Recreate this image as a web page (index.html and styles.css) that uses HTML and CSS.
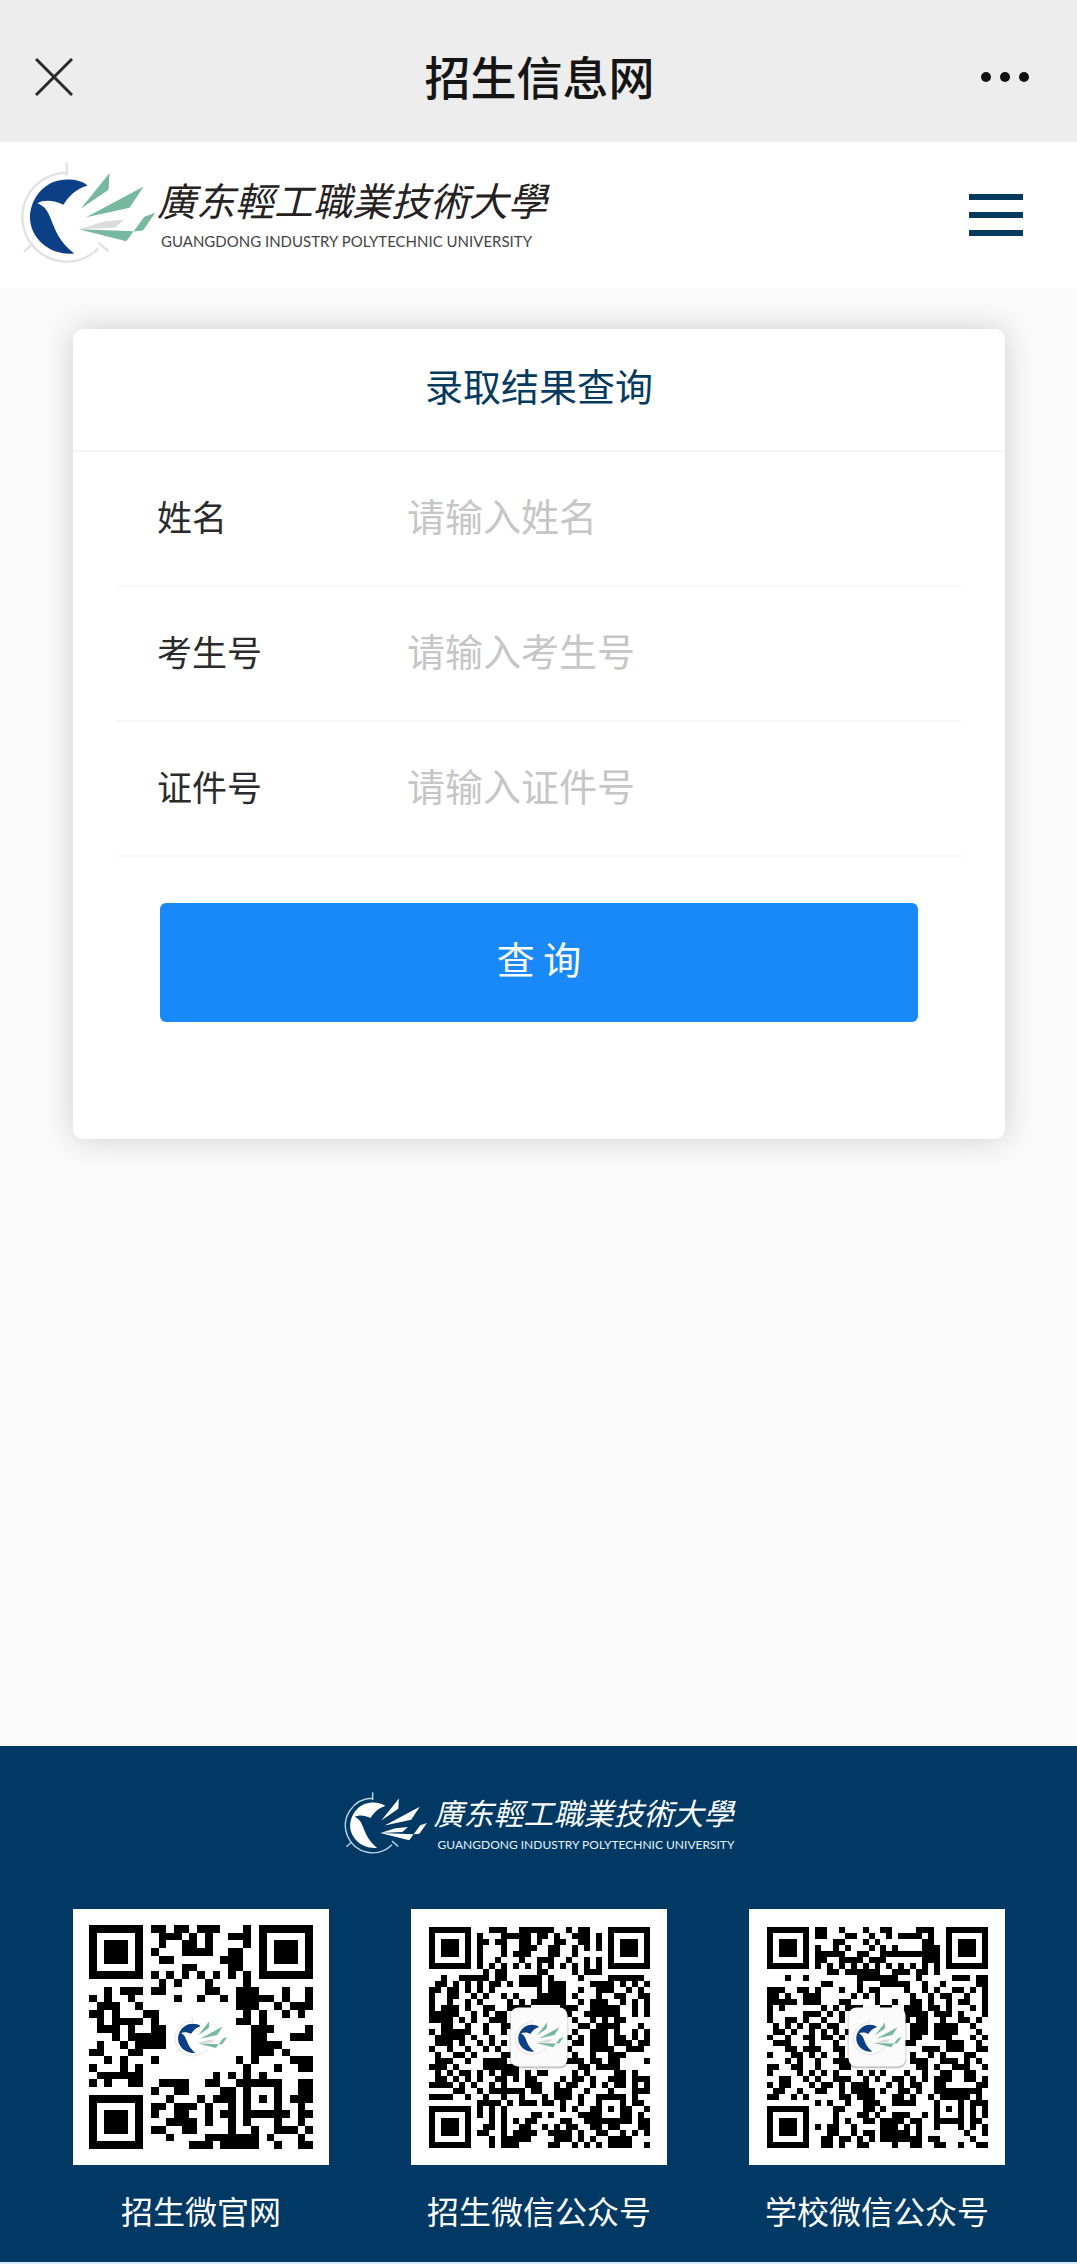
FILE: index.html
```html
<!DOCTYPE html>
<html lang="zh-CN">
<head>
<meta charset="utf-8">
<meta name="viewport" content="width=device-width, initial-scale=1">
<title>招生信息网</title>
<link rel="stylesheet" href="styles.css">
</head>
<body>
<svg class="defs" aria-hidden="true">
  <symbol id="emblem" viewBox="60 35 410 305">
    <g fill="none" stroke="var(--ring)" stroke-width="7">
      <path d="M200 67A133 133 0 1 0 294 294M200 37v38M72 303l27-24M294 276l31 26"/>
    </g>
    <path fill="var(--disc)" d="M262 105C240 85 190 82 160 95C112 115 88 165 90 205C93 265 150 316 222 309C180 276 166 242 152 205C143 178 130 165 112 158C130 147 162 148 190 163C205 138 227 115 262 105Z"/>
    <path fill="var(--wing)" d="M328 68L325 118L242 175ZM430 108L388 172L258 200ZM236 236L400 242L378 272ZM465 187L428 240L400 243L432 199Z"/>
    <path fill="var(--feather)" d="M372 207L345 232L238 236L310 213Z"/>
  </symbol>
</svg>

<header class="topbar">
  <button class="icon-btn" type="button" aria-label="关闭">
    <svg class="icon-close" viewBox="0 0 38 38"><path d="M1 1L37 37M37 1L1 37"/></svg>
  </button>
  <h1 class="topbar-title">招生信息网</h1>
  <button class="icon-btn" type="button" aria-label="更多">
    <svg class="icon-more" viewBox="0 0 50 12"><circle cx="6" cy="6" r="5"/><circle cx="25" cy="6" r="5"/><circle cx="44" cy="6" r="5"/></svg>
  </button>
</header>

<div class="site-head">
  <a class="brand" href="#">
    <svg class="brand-emblem" aria-hidden="true"><use href="#emblem"/></svg>
    <span class="brand-text">
      <span class="brand-cn">廣东輕工職業技術大學</span>
      <span class="brand-en">GUANGDONG INDUSTRY POLYTECHNIC UNIVERSITY</span>
    </span>
  </a>
  <button class="icon-btn" type="button" aria-label="菜单">
    <svg class="icon-menu" viewBox="0 0 54 42"><path d="M0 3h54M0 21h54M0 39h54"/></svg>
  </button>
</div>

<main class="main">
  <form class="card">
    <h2 class="card-title">录取结果查询</h2>
    <div class="fields">
      <div class="field"><label for="name">姓名</label><input id="name" type="text" placeholder="请输入姓名"></div>
      <div class="field"><label for="exam">考生号</label><input id="exam" type="text" placeholder="请输入考生号"></div>
      <div class="field"><label for="idno">证件号</label><input id="idno" type="text" placeholder="请输入证件号"></div>
    </div>
    <button class="submit" type="button">查 询</button>
  </form>
</main>

<footer class="footer">
  <a class="brand brand-light" href="#">
    <svg class="brand-emblem" aria-hidden="true"><use href="#emblem"/></svg>
    <span class="brand-text">
      <span class="brand-cn">廣东輕工職業技術大學</span>
      <span class="brand-en">GUANGDONG INDUSTRY POLYTECHNIC UNIVERSITY</span>
    </span>
  </a>
  <div class="codes">
    <figure class="code">
      <div class="code-box code-box-large">
        <svg class="qr" data-code="site"></svg>
        <svg class="code-emblem" aria-hidden="true"><use href="#emblem"/></svg>
      </div>
      <figcaption>招生微官网</figcaption>
    </figure>
    <figure class="code">
      <div class="code-box">
        <svg class="qr" data-code="admission"></svg>
        <span class="code-badge"><svg class="code-emblem-small" aria-hidden="true"><use href="#emblem"/></svg></span>
      </div>
      <figcaption>招生微信公众号</figcaption>
    </figure>
    <figure class="code">
      <div class="code-box">
        <svg class="qr" data-code="school"></svg>
        <span class="code-badge"><svg class="code-emblem-small" aria-hidden="true"><use href="#emblem"/></svg></span>
      </div>
      <figcaption>学校微信公众号</figcaption>
    </figure>
  </div>
</footer>
<script src="codes.js"></script>
</body>
</html>
```
FILE: styles.css
```css
* { box-sizing: border-box; }

:root {
  --navy: #003964;
  --disc: #0b3f86;
  --wing: #76b8a0;
  --feather: #dcdcdc;
  --ring: #e2e2e2;
}

body {
  margin: 0;
  min-height: 100vh;
  display: flex;
  flex-direction: column;
  background: #fafafa;
  color: #2b2b2b;
  font-family: "Noto Sans CJK SC", sans-serif;
}

h1, h2, figure { margin: 0; font-weight: 400; }
button, input { font-family: inherit; }
svg { display: block; }
.defs { position: absolute; width: 0; height: 0; }

.icon-btn {
  padding: 0;
  border: 0;
  background: none;
}

.topbar {
  display: grid;
  grid-template-columns: 1fr auto 1fr;
  align-items: center;
  height: 142px;
  padding: 12px 47px 0 35px;
  background: #ededed;
}
.topbar .icon-btn:last-child { justify-self: end; }
.topbar .icon-btn:first-child { justify-self: start; }
.topbar-title {
  padding: 0 0 4px 14px;
  font-size: 46px;
  line-height: 60px;
  font-weight: 500;
  color: #151515;
}
.icon-close { width: 38px; height: 38px; fill: none; stroke: #2a2a2a; stroke-width: 3; }
.icon-more { width: 50px; height: 12px; fill: #111; }
.icon-menu { width: 54px; height: 42px; fill: none; stroke: #063a5f; stroke-width: 6; }

.site-head {
  display: flex;
  justify-content: space-between;
  align-items: center;
  height: 146px;
  padding: 0 54px 0 20px;
  background: #fff;
}

.brand {
  display: flex;
  align-items: center;
  padding-bottom: 4px;
  color: #262222;
  text-decoration: none;
}
.brand-emblem { width: 137px; height: 102px; }
.brand-text { display: flex; flex-direction: column; white-space: nowrap; }
.brand-cn { font-size: 39px; line-height: 50px; font-style: italic; }
.brand-en {
  padding: 5px 0 0 4px;
  font-family: Lato, sans-serif;
  font-size: 15px;
  line-height: 24px;
  color: #444;
}

.main { flex: 1; padding: 41px 72px 0 73px; }

.card {
  padding-bottom: 117px;
  border-radius: 10px;
  background: #fff;
  box-shadow: 0 0 32px rgba(0, 0, 0, 0.18);
}
.card-title {
  height: 123px;
  border-bottom: 2px solid #f4f4f4;
  font-size: 38px;
  line-height: 112px;
  text-align: center;
  color: #063a5f;
}
.fields { padding: 0 43px; }
.field {
  display: flex;
  align-items: center;
  height: 135px;
  padding: 0 0 6px 41px;
  border-bottom: 2px solid #f8f8f8;
}
.field label { width: 250px; font-size: 35px; }
.field input {
  flex: 1;
  min-width: 0;
  height: 80px;
  padding: 0 0 2px;
  border: 0;
  outline: 0;
  background: none;
  font-size: 38px;
  color: #2b2b2b;
}
.field input::placeholder { color: #c6c6c6; opacity: 1; }
.submit {
  display: block;
  width: calc(100% - 174px);
  height: 119px;
  margin: 46px 87px 0;
  padding: 0 0 10px;
  border: 0;
  border-radius: 6px;
  background: #1989fa;
  color: #fff;
  font-size: 38px;
}

.footer {
  padding: 44px 72px 29px 73px;
  border-bottom: 2px solid #d5ecfa;
  background: var(--navy);
  color: #fff;
}
.brand-light {
  --disc: #fff;
  --wing: #fff;
  --feather: #fff;
  --ring: #b9d3e6;
  justify-content: center;
  gap: 6px;
  padding: 0;
  color: #fff;
}
.brand-light .brand-emblem { width: 84px; height: 66px; }
.brand-light .brand-cn { font-size: 30px; line-height: 38px; }
.brand-light .brand-en { font-size: 12px; line-height: 18px; color: #e6f3fb; }

.codes {
  display: flex;
  justify-content: space-between;
  margin-top: 53px;
}
.code { display: flex; flex-direction: column; align-items: center; }
.code-box {
  position: relative;
  display: grid;
  place-items: center;
  width: 256px;
  height: 256px;
  background: #fff;
}
.qr { width: 221px; height: 221px; fill: #000; }
.code-box-large .qr { width: 224px; height: 224px; }
.code-emblem, .code-badge {
  position: absolute;
  top: 50%;
  left: 50%;
  transform: translate(-50%, -50%);
}
.code-emblem { width: 54px; height: 40px; }
.code-badge {
  display: grid;
  place-items: center;
  width: 57px;
  height: 59px;
  border-radius: 8px;
  background: #fbfbfb;
  box-shadow: 0 1px 2px rgba(0, 0, 0, 0.3);
}
.code-emblem-small { width: 50px; height: 37px; }
figcaption {
  margin-top: 22px;
  font-size: 32px;
  line-height: 46px;
  white-space: nowrap;
}
```
FILE: codes.js
```js
// Module rows of each QR code: "#" is dark, "." is light.
const codes = {
  site: [
    "#######.##.##.###...#.#######",
    "#.....#..###.#.#..###.#.....#",
    "#.###.#..#..##.#....#.#.###.#",
    "#.###.#.#...####..##..#.###.#",
    "#.###.#..##......###..#.###.#",
    "#.....#.....##....##..#.....#",
    "#######.#.#.#.#.#.#.#.#######",
    ".........#.#...#....#........",
    "..#.###.##.....##..###...#..#",
    "#.#..#.....#..#..#.#####.#..#",
    ".###..#............###..#.###",
    "##.#...##...........#.#..#.#.",
    ".#.####.#..........##.#......",
    ".###.#..##...........###....#",
    "...#.#####...........##...###",
    ".#..#.####...........####....",
    "##...##..............###.#...",
    "..#.#...#..........#.#....###",
    "#...#.#.............#...#..##",
    ".######.........#.#.#.#......",
    "#.#..##..####..##..######..##",
    "........#..##....##.#...#..##",
    "#######...#...#.###.#.#.#.###",
    "#.....#.##.###.#..#.#...#..#.",
    "#.###.#.#..##..#.##.######.##",
    "#.###.#...####.#..#.#...#..#.",
    "#.###.#.##..##....#..#..###.#",
    "#.....#...#....#######.#...#.",
    "#######......###.#####..#..##"
  ],
  admission: [
    "#######...###..######..#.##...#######",
    "#.....#.#...#####.##.#..###.#.#.....#",
    "#.###.#.##.##..##.#..##..##.#.#.###.#",
    "#.###.#.#...#..###..##..#.#.#.#.###.#",
    "#.###.#.#...#.###...##..#.....#.###.#",
    "#.....#.#..#...#..###..#..#.#.#.....#",
    "#######.#.#.#.#.#.#.#.#.#.#.#.#######",
    ".........#.##.....##....#.###........",
    "..#..#####.##..####.#....#....######.",
    ".##.#.#.#.##.#.####.###....####.#.#.#",
    "##.##.#.#.#.......#.###..#..###..#.#.",
    "#..##..#.#..#.#...#####.#...#..##..##",
    "#..#..#.#....#.#.######..#.###..#.#.#",
    "#.###.#..##..####.....###..#####..#.#",
    "#####..#.#.##..........#..######..#.#",
    "####.#.#..###...........#..#.#.##....",
    "..##..#..#..##...........##.####...#.",
    "#.#####..#..#...........#..###.#..#.#",
    ".#####.#..#............#.#.###.##.#.#",
    ".###.#..#.#.#...........##.###.###.##",
    "#..#..#..#.#...........#...####..###.",
    ".#..##.#....##..........#..#..###....",
    ".###..#..####..........###.##.##....#",
    "###.#....######..........##.####.....",
    ".#.#.##.#.#.###.#.##....#.#....##.#..",
    ".##.#.#.#..##.#.##....#.##.#..###.###",
    "####.#.#..#.#...###..#.##..#.#.##.#.#",
    "....##..#.######.##..###..#...#...###",
    "####..#..#..#..#...#.###.#..#####.#..",
    "........####.#.###.##.#..#..#...#.##.",
    "#######.#.#.#.........#.#..##.#.##..#",
    "#.....#.#.#.#....##.#....####...##.#.",
    "#.###.#...#.#.#.##....##..########.##",
    "#.###.#..##.#..##..#.#.##..##.##...##",
    "#.###.#.##..#.####..####.#..##..#.#.#",
    "#.....#...#.#####....###.#.#..####...",
    "#######...#.###.....##..#.#.#.####..#"
  ],
  school: [
    "#######.##..#...#..##....###..#######",
    "#.....#.##...##..#..#.####.#..#.....#",
    "#.###.#....##...#.#.......##..#.###.#",
    "#.###.#.#..#.#...#.#.#....###.#.###.#",
    "#.###.#.#####..##..##########.#.###.#",
    "#.....#.##..####.###......###.#.....#",
    "#######.#.#.#.#.#.#.#.#.#.#.#.#######",
    "..........##.######..###.##.#........",
    "...#..#........#######...#.....###.##",
    ".........##....#...#####..#..#.....##",
    "###..##.#...#..#.##....#..#.#..##.#.#",
    "##.#..###.....#.#.#.....#..#.##..#..#",
    "#####.###...##....#..#..##.#..#.##..#",
    "#.#......#.#.###...##..###.##.#...#.#",
    "#.....###.#.#..........####.###.#...#",
    "#..##.#..#..#..........#.##..#..##.#.",
    ".#.#.#.##.##............###.####..#..",
    ".##.#..#.#.#.#..........###.####...#.",
    "#..#..##.##.#...........##..###...#.#",
    ".###...#...#...........##.....###..#.",
    "...##.###..##.............###.###..##",
    "#...##.#.#..#...........#..#.#...##..",
    "...#.#..#..###..........###..###.#.#.",
    "##..##..#...##...........##.#..###..#",
    "#....#.#.#.#...#.#.#...#..#..##..##..",
    "..##..#.#..###..#.#..##.#.#.###..##.#",
    "#.##...#.##.#.###...#.#.##..##.....##",
    ".##..#..##..#.####.#..##.#..########.",
    "##..#.#.....##.###...##.#..#.#####.#.",
    "........#.#..#..###..####...#...#.###",
    "#######....##...##.#........#.#.#.#.#",
    "#.....#....#...##.#..###..#.#...#.#.#",
    "#.###.#....#.#..##.####.##..#####.##.",
    "#.###.#.#.##..#....###.#.#..#...#.#.#",
    "#.###.#...##..#.##.#####.#.......#..#",
    "#.....#..##.##.#.#.#######.##.....#..",
    "#######..##.#..##....#..##..##..#..##"
  ]
};

document.querySelectorAll(".qr").forEach((svg) => {
  const rows = codes[svg.dataset.code];
  const path = document.createElementNS("http://www.w3.org/2000/svg", "path");
  let d = "";
  rows.forEach((row, y) => {
    for (const run of row.matchAll(/#+/g)) {
      const n = run[0].length;
      d += `M${run.index} ${y}h${n}v1h-${n}z`;
    }
  });
  path.setAttribute("d", d);
  path.setAttribute("shape-rendering", "crispEdges");
  svg.setAttribute("viewBox", `0 0 ${rows.length} ${rows.length}`);
  svg.append(path);
});
```
